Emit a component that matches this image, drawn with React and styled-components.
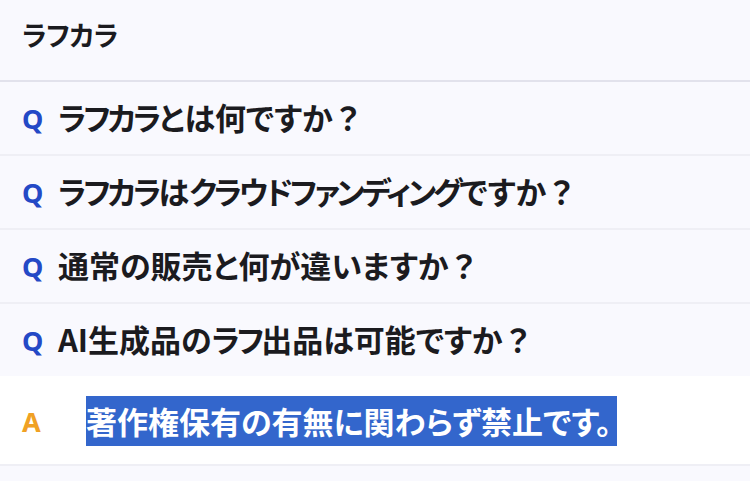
import React from 'react';
import styled, { createGlobalStyle } from 'styled-components';

const GlobalStyle = createGlobalStyle`
    html, body {
        margin: 0;
        padding: 0;
        background: #f9f9fe;
    }
    body {
        font-family: "Noto Sans CJK JP", "Noto Sans", sans-serif;
        color: #1b1b1f;
    }
`;

const faqs = [
    { q: 'ラフカラとは何ですか？' },
    { q: 'ラフカラはクラウドファンディングですか？' },
    { q: '通常の販売と何が違いますか？' },
    { q: 'AI生成品のラフ出品は可能ですか？', a: '著作権保有の有無に関わらず禁止です。', open: true },
];

// katakana runs are set tighter, the question mark keeps its full em box
const typeset = (text) =>
    text.split(/([\u30A0-\u30FF]+|？)/).filter(Boolean).map((part, i) => {
        if (/^[\u30A0-\u30FF]+$/.test(part)) return <Kana key={i}>{part}</Kana>;
        if (part === '？') return <Punct key={i}>{part}</Punct>;
        return <React.Fragment key={i}>{part}</React.Fragment>;
    });

const App = () => {
    return (
        <Page>
            <GlobalStyle />
            <Header>
                <Title>ラフカラ</Title>
            </Header>
            <List>
                {faqs.map((item, i) => (
                    <Item key={i}>
                        <Question>
                            <Mark kind="q">Q</Mark>
                            <QText>{typeset(item.q)}</QText>
                        </Question>
                        {item.open && (
                            <Answer>
                                <Mark kind="a">A</Mark>
                                <AText><Selected>{typeset(item.a)}</Selected></AText>
                            </Answer>
                        )}
                    </Item>
                ))}
                <Item>
                    <Question />
                </Item>
            </List>
        </Page>
    );
};

const Page = styled.div`
    width: 100%;
    min-height: 100vh;
    background: #f9f9fe;
`;

const Header = styled.header`
    height: 80px;
    display: flex;
    align-items: center;
    padding: 0 22px;
    border-bottom: 2px solid #e2e2ec;
`;

const Title = styled.h1`
    margin: 0;
    margin-top: -12px;
    font-size: 27px;
    font-weight: 700;
    line-height: 1;
    font-feature-settings: "palt";
    letter-spacing: -0.5px;
`;

const List = styled.div`
    display: flex;
    flex-direction: column;
`;

const Item = styled.div`
    border-bottom: 2px solid #efeff5;
    &:last-child {
        border-bottom: none;
    }
`;

const Question = styled.div`
    height: 72px;
    display: flex;
    align-items: center;
    padding: 0 22px;
`;

const Mark = styled.span`
    flex: 0 0 36px;
    font-family: "Noto Sans", sans-serif;
    font-weight: 700;
    font-size: 27px;
    line-height: 1;
    color: ${p => (p.kind === 'a' ? '#f0a124' : '#2449c6')};
`;

const Kana = styled.span`
    letter-spacing: -3px;
`;

const Punct = styled.span`
    font-feature-settings: normal;
`;

const QText = styled.span`
    font-size: 31px;
    font-weight: 700;
    font-feature-settings: "palt";
    line-height: 1;
    margin-top: -4px;
`;

const Answer = styled.div`
    height: 86px;
    display: flex;
    align-items: center;
    padding: 0 22px;
    background: #ffffff;
    border-top: 2px solid #ffffff;
`;

const AText = styled.div`
    padding-left: 28px;
    font-size: 31px;
    font-weight: 700;
    font-feature-settings: "palt";
    line-height: 50px;
`;

const Selected = styled.span`
    display: inline-block;
    background: #3366cc;
    color: #ffffff;
    height: 50px;
    padding-right: 6px;
`;

export default App;
